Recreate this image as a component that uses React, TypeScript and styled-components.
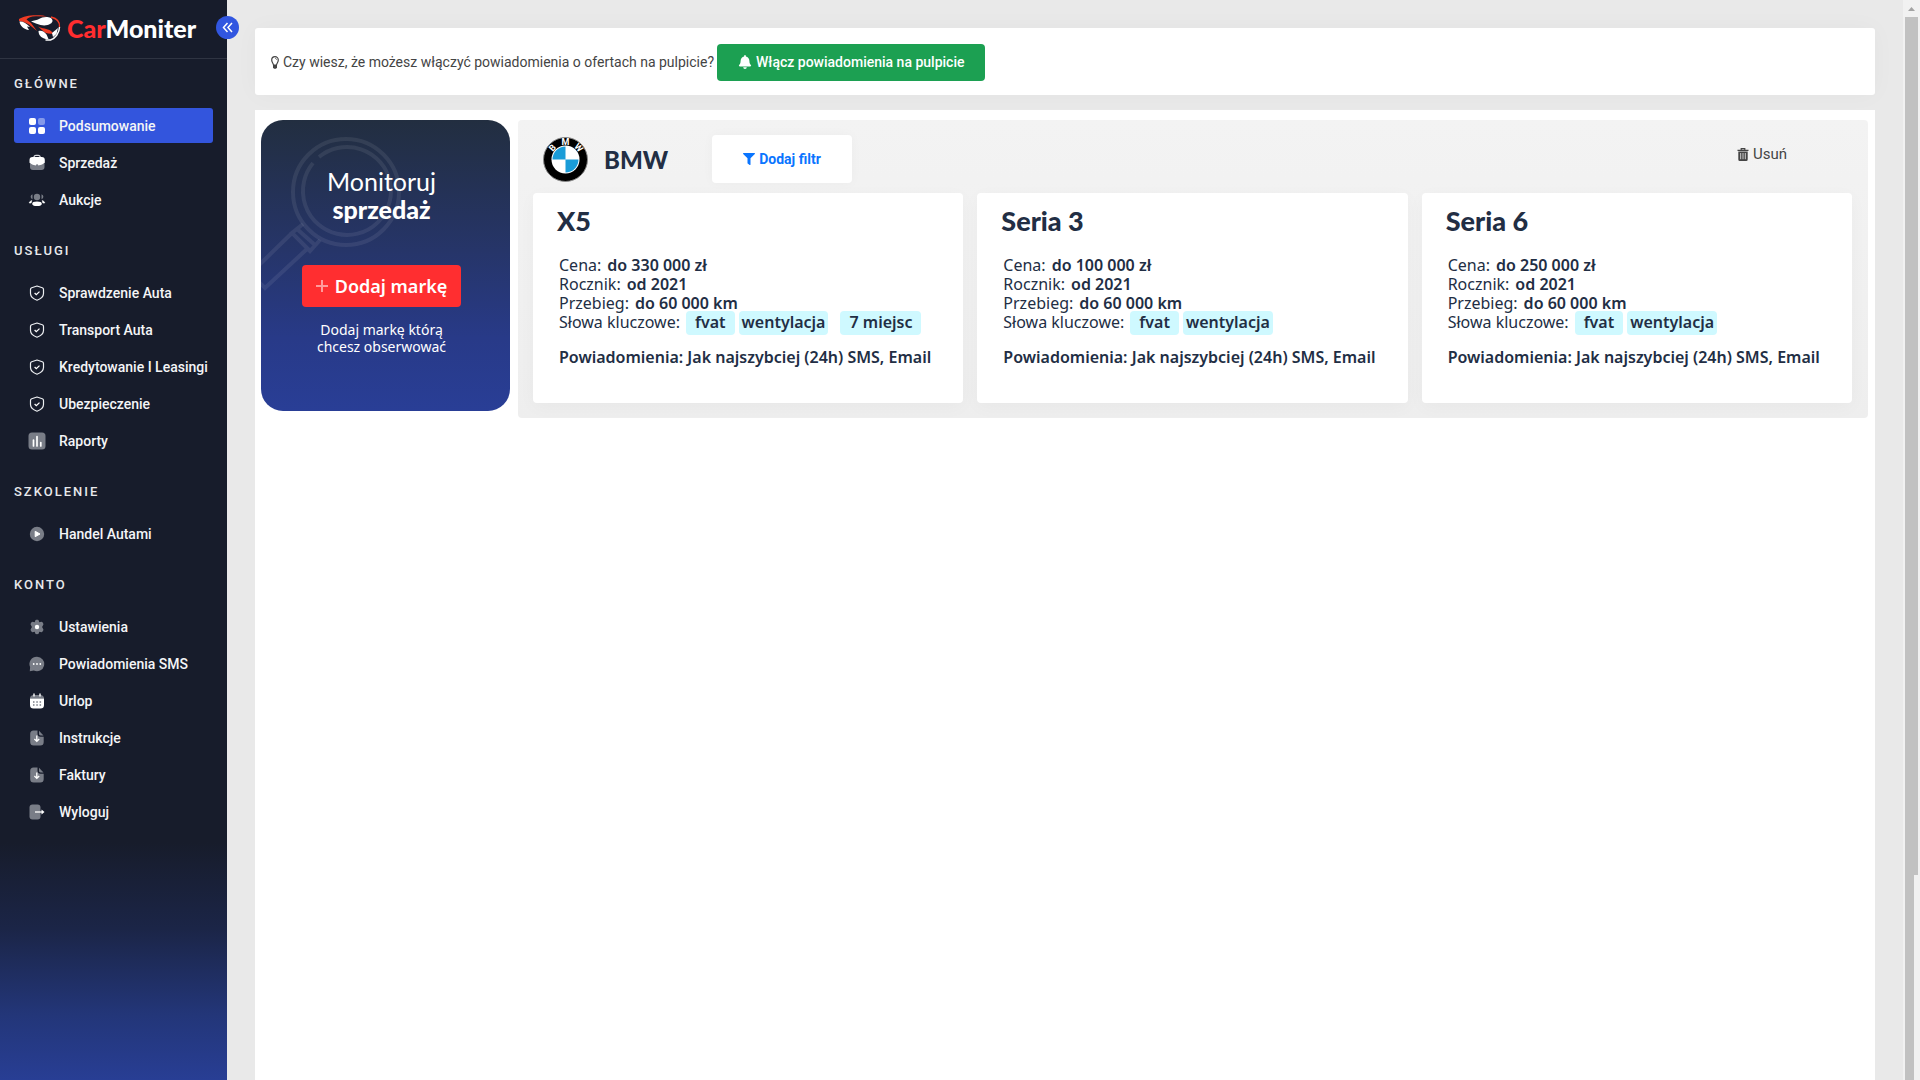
import React from "react";
import styled, { createGlobalStyle } from "styled-components";
import { FaBell, FaFilter } from "react-icons/fa";

const GlobalStyle = createGlobalStyle`
  *, *::before, *::after { box-sizing: border-box; }
  body {
    margin: 0;
    background: #e9e9e9;
    font-family: Roboto, "Liberation Sans", sans-serif;
    font-size: 14px;
    color: #444;
  }
  button { font-family: inherit; border: 0; cursor: pointer; }
  h1, h2, h3, p, ul, dl, dd { margin: 0; padding: 0; }
`;

const display = `"Lato", "Open Sans", sans-serif`;
const copy = `"Noto Sans", "Open Sans", sans-serif`;

const Page = styled.div`
  display: flex;
  align-items: stretch;
  min-height: 100vh;
`;

/* ---------- sidebar ---------- */

const Sidebar = styled.aside`
  position: relative;
  flex: 0 0 227px;
  background: linear-gradient(180deg, #171c2b 0%, #171c2b 78%, #1b2547 86%, #233679 94%, #283e94 100%);
  color: #fff;
`;

const Brand = styled.a`
  display: flex;
  align-items: center;
  gap: 6px;
  height: 59px;
  padding: 0 0 2px 18px;
  border-bottom: 1px solid #2f3442;
  color: #fff;
  font-family: ${display};
  font-size: 25px;
  font-weight: 900;
  text-decoration: none;
`;

const BrandAccent = styled.span`
  color: #ff2d2f;
`;

const Collapse = styled.button`
  position: absolute;
  top: 16px;
  right: -12px;
  display: grid;
  place-items: center;
  width: 23px;
  height: 23px;
  padding: 0;
  border-radius: 50%;
  background: #3156e0;
`;

const Nav = styled.nav`
  display: flex;
  flex-direction: column;
  gap: 24px;
  padding: 15px 14px 0;
`;

const NavTitle = styled.h2`
  margin-bottom: 14px;
  color: #e8e9ec;
  font-size: 13px;
  font-weight: 500;
  line-height: 20px;
  letter-spacing: 2px;
`;

const NavList = styled.ul`
  display: flex;
  flex-direction: column;
  gap: 2px;
  list-style: none;
`;

const NavLink = styled.a<{ $active?: boolean }>`
  display: flex;
  align-items: center;
  gap: 13px;
  height: 35px;
  padding-left: 14px;
  border-radius: 3px;
  background: ${(p) => (p.$active ? "#3355dd" : "transparent")};
  color: #f4f5f7;
  font-size: 14px;
  font-weight: 500;
  text-decoration: none;
  white-space: nowrap;

  svg { flex: none; }
`;

/* ---------- main ---------- */

const Main = styled.main`
  flex: 1;
  min-width: 0;
  display: flex;
  flex-direction: column;
  gap: 15px;
  padding: 28px 28px 0;
`;

const Banner = styled.section`
  display: flex;
  align-items: center;
  gap: 3px;
  min-height: 67px;
  padding: 1px 16px 0;
  border-radius: 3px;
  background: #fff;
  box-shadow: 0 0 24px rgba(0, 0, 0, 0.03);
`;

const BannerText = styled.p`
  display: flex;
  align-items: center;
  gap: 4px;
  font-size: 14px;
`;

const NotifyButton = styled.button`
  display: flex;
  align-items: center;
  gap: 4px;
  height: 37px;
  padding: 0 21px;
  border-radius: 4px;
  background: #1ca052;
  color: #fff;
  font-size: 14px;
  font-weight: 500;
`;

const Panel = styled.section`
  flex: 1;
  display: flex;
  align-items: flex-start;
  gap: 8px;
  padding: 10px 7px 24px 6px;
  background: #fff;
`;

const Promo = styled.section`
  position: relative;
  overflow: hidden;
  flex: 0 0 249px;
  display: flex;
  flex-direction: column;
  align-items: center;
  min-height: 291px;
  padding: 47px 20px 0 12px;
  border-radius: 22px;
  background: linear-gradient(180deg, #222e40 0%, #263569 45%, #283a88 75%, #293e96 100%);
  color: #fff;
  font-family: ${display};
  text-align: center;
`;

const Glass = styled.svg`
  position: absolute;
  top: 0;
  left: 0;
  width: 160px;
  height: 180px;
  fill: none;
  stroke: rgba(255, 255, 255, 0.08);
  stroke-width: 4;
`;

const PromoTitle = styled.h1`
  position: relative;
  margin-bottom: 42px;
  font-size: 25px;
  font-weight: 400;
  line-height: 28px;

  strong { display: block; font-weight: 900; }
`;

const AddBrand = styled.button`
  display: flex;
  align-items: center;
  justify-content: center;
  gap: 7px;
  width: 159px;
  height: 42px;
  margin-bottom: 14px;
  padding: 0;
  border-radius: 4px;
  background: #ff2e30;
  color: #fff;
  font-family: ${copy};
  font-size: 18px;
  font-weight: 600;
`;

const PromoNote = styled.p`
  font-family: ${copy};
  font-size: 14px;
  line-height: 17px;
`;

const BrandPanel = styled.section`
  flex: 1;
  min-width: 0;
  padding: 15px 16px 15px 15px;
  border-radius: 4px;
  background: linear-gradient(180deg, #f3f3f3, #eeeeee);
`;

const BrandHeader = styled.header`
  display: flex;
  align-items: center;
  height: 48px;
  margin-bottom: 10px;
  padding: 0 65px 0 10px;
`;

const BrandName = styled.h2`
  width: 108px;
  margin-left: 16px;
  color: #222e44;
  font-family: ${display};
  font-size: 24px;
  font-weight: 900;
`;

const FilterButton = styled.button`
  display: flex;
  align-items: center;
  justify-content: center;
  gap: 4px;
  width: 140px;
  height: 48px;
  border-radius: 4px;
  background: #fff;
  box-shadow: 0 0 12px rgba(0, 0, 0, 0.03);
  color: #0a75ff;
  font-size: 14px;
  font-weight: 700;
`;

const RemoveButton = styled.button`
  display: flex;
  align-items: center;
  gap: 4px;
  margin: 0 0 10px auto;
  padding: 0;
  background: none;
  color: #444;
  font-size: 15px;
`;

const Cards = styled.div`
  display: grid;
  grid-template-columns: repeat(3, minmax(0, 1fr));
  gap: 14px;
`;

const Card = styled.article`
  min-height: 210px;
  padding: 13px 8px 16px 24px;
  border-radius: 4px;
  background: #fff;
  box-shadow: 0 4px 18px rgba(0, 0, 0, 0.03);
  color: #222e44;
  font-family: ${copy};
`;

const CardTitle = styled.h3`
  margin-bottom: 20px;
  font-family: ${display};
  font-size: 27px;
  font-weight: 900;
  line-height: 30px;
`;

const Specs = styled.dl`
  padding-left: 2px;
  font-size: 16px;
  line-height: 19px;
`;

const Spec = styled.div`
  display: flex;
  gap: 6px;
  height: 19px;
  white-space: nowrap;

  dd { font-weight: 600; }
`;

const Tags = styled.dd`
  display: flex;
  align-items: center;
  gap: 4px;
`;

const Tag = styled.span<{ $roomy?: boolean }>`
  padding: 2px ${(p) => (p.$roomy ? 9 : 3)}px 3px;
  border-radius: 4px;
  background: #cff9ff;

  * + & { margin-left: ${(p) => (p.$roomy ? 8 : 0)}px; }
`;

const Notice = styled.p`
  margin-top: 16px;
  padding-left: 2px;
  font-size: 16px;
  font-weight: 600;
  line-height: 19px;
  white-space: nowrap;
`;

/* ---------- page scroll rail ---------- */

const Rail = styled.div`
  flex: 0 0 17px;
  display: flex;
  flex-direction: column;
  align-items: flex-start;
  background: #f1f1f1;
`;

const RailArrow = styled.svg`
  flex: none;
  width: 17px;
  height: 17px;
`;

const RailThumb = styled.div`
  flex: 858;
  width: 13px;
  margin-left: 2px;
  background: #c1c1c1;
`;

const RailRest = styled.div`
  flex: 205;
  width: 9px;
  margin-left: 2px;
  background: #c1c1c1;
`;

/* ---------- drawings ---------- */

const dim = "#797d87";

const glyphs: Record<string, React.ReactNode> = {
  grid: (
    <>
      <rect x="0" y="0" width="7" height="7" rx="2" fill="#fff" />
      <rect x="9" y="0" width="7" height="7" rx="2" fill="#fff" opacity=".4" />
      <rect x="0" y="9" width="7" height="7" rx="2" fill="#fff" />
      <rect x="9" y="9" width="7" height="7" rx="2" fill="#fff" />
    </>
  ),
  bag: (
    <>
      <path d="M1 8.5h14.500V12a3 3 0 0 1-3 3H4a3 3 0 0 1-3-3z" fill={dim} />
      <path d="M5 2.200C5 1 6 .3 7 .3h2.200c1 0 2 .7 2 1.900" fill="none" stroke="#d5d7db" strokeWidth="1.200" />
      <path d="M3.500 2h9.300a3 3 0 0 1 3 3v2.500c0 1-4 2.700-6.500 2.900a1.200 1.200 0 0 0-2.400 0C4.500 10.200.5 8.500.5 7.500V5a3 3 0 0 1 3-3z" fill="#fff" />
    </>
  ),
  people: (
    <>
      <circle cx="8" cy="5" r="3.200" fill={dim} />
      <path d="M3.500 2.300A2.600 2.600 0 0 0 3.500 7.300M12.500 2.300a2.600 2.600 0 0 1 0 5" fill={dim} />
      <ellipse cx="8" cy="11.800" rx="4.800" ry="2.300" fill="#fff" />
      <path d="M2.800 8.600C1.400 9 .3 9.900.3 11h1.800zM13.200 8.600c1.400.4 2.500 1.300 2.500 2.400h-1.800z" fill="#fff" stroke="#fff" strokeWidth=".6" />
    </>
  ),
  shield: (
    <>
      <path d="M8 1l5.300 1.800c.8.300 1.200.8 1.200 1.600v4.100c0 3.200-3 5.400-6.500 6.700C4.500 13.900 1.500 11.700 1.500 8.500V4.400c0-.8.400-1.300 1.200-1.600z" fill="none" stroke="#eceef1" strokeWidth="1.200" strokeLinejoin="round" />
      <path d="M5.600 8l1.700 1.600 3.200-3" fill="none" stroke="#fff" strokeWidth="1.300" />
    </>
  ),
  chart: (
    <>
      <rect x="-.5" y="-.5" width="17" height="17" rx="3.500" fill={dim} />
      <path d="M4.500 7v6M8 3.500V13M11.800 9.500V13" stroke="#fff" strokeWidth="1.700" strokeLinecap="round" />
    </>
  ),
  play: (
    <>
      <circle cx="8" cy="8" r="7.200" fill={dim} />
      <path d="M6.200 5.300v5.400L11 8z" fill="#fff" stroke="#fff" strokeLinejoin="round" />
    </>
  ),
  gear: (
    <>
      <path d="M6.400 1.200C6.800.6 9.200.6 9.600 1.200l.7 2 2.200-.4c.8 0 2.200 2 1.900 2.700L13.100 8l1.300 2.500c.3.700-1.100 2.700-1.900 2.700l-2.200-.4-.7 2c-.4.600-2.800.6-3.200 0l-.7-2-2.200.4c-.8 0-2.200-2-1.900-2.700L2.900 8 1.600 5.500c-.3-.7 1.100-2.700 1.900-2.700l2.200.4z" fill={dim} />
      <circle cx="8" cy="8" r="2.200" fill="#fff" />
    </>
  ),
  chat: (
    <>
      <path d="M8 .7a7.300 7.300 0 1 1-3.200 13.900L.8 15.300l.3-4.200A7.300 7.300 0 0 1 8 .7z" fill={dim} />
      <path d="M4.700 8h.01M8 8h.01M11.300 8h.01" stroke="#fff" strokeWidth="1.800" strokeLinecap="round" />
    </>
  ),
  calendar: (
    <>
      <path d="M1 5.500C1 3.500 2.500 2 4.500 2h7C13.500 2 15 3.500 15 5.500z" fill={dim} />
      <path d="M1 5.500h14V12a3.500 3.500 0 0 1-3.500 3.500h-7A3.500 3.500 0 0 1 1 12z" fill="#fff" />
      <path d="M5 .5v3M11 .5v3" stroke="#fff" strokeWidth="1.400" />
      <path d="M4 9h1.500M7.300 9h1.500M10.600 9h1.500M4 12h1.500M7.300 12h1.500M10.600 12h1.500" stroke={dim} strokeWidth="1.400" />
    </>
  ),
  file: (
    <>
      <path d="M4.500.5h4v3c0 2.200 1 3.200 3 3.200h3.200V12a3.500 3.500 0 0 1-3.500 3.500H4.700A3.500 3.500 0 0 1 1.200 12V4A3.500 3.500 0 0 1 4.500.5z" fill={dim} />
      <path d="M10 .8l4.500 4.600h-2.800c-1.200 0-1.700-.6-1.700-1.700z" fill={dim} />
      <path d="M7.800 5.500v5.500M5.400 9l2.400 2.400L10.200 9" fill="none" stroke="#fff" strokeWidth="1.300" />
    </>
  ),
  exit: (
    <>
      <rect x=".5" y=".5" width="11" height="15" rx="3" fill={dim} />
      <path d="M6 8h7" stroke="#fff" strokeWidth="1.300" />
      <path d="M12.500 5.600v4.800L15.500 8z" fill="#fff" />
    </>
  ),
};

const Glyph = ({ name }: { name: string }) => (
  <svg width="18" height="18" viewBox="-1 -1 18 18" aria-hidden="true">
    {glyphs[name]}
  </svg>
);

const CarMark = () => (
  <svg width="43" height="28" viewBox="0 0 43 28" aria-hidden="true">
    <path d="M1 5C6 1.500 15 .5 25 1.500l4 1-11-.3C13 2.200 10 3.500 8.500 5.500L13 9l6 8-8-6.500C7 8 3 7 1 7z" fill="#ef3b24" />
    <path d="M1.500 7.500c3-.5 7 1.500 10.500 5.500l-3-.5 2 3.500C6 15.500 2 12 1.500 7.500z" fill="#fff" />
    <path d="M13 7.500c3-1.500 6-1 8-2.500 4-3 13-3 13.500 1.500.3 3-5 6-12 4.500-3-.7-6-2-9.500-3.500z" fill="#fff" />
    <path d="M20 12.500c4 2.500 9 1.500 13 4.500l2.500 2.500c-4 1-9-.5-11-3z" fill="#ef3b24" />
    <path d="M20.500 17c3-1 6 .5 8 3.500l2 4.500c-5 .5-10-2.500-10-8z" fill="#fff" />
    <path d="M33 3c6 1.500 9 5 8.500 10" fill="none" stroke="#ef3b24" strokeWidth="1.300" />
    <path d="M41.500 13c0 6-4.500 11.500-9 13h-5" fill="none" stroke="#fff" strokeWidth="1.500" />
    <path d="M34 19l6-5-1.500 6-3.500 3z" fill="#fff" />
  </svg>
);

const BmwBadge = () => (
  <svg width="45" height="45" viewBox="0 0 45 45" role="img" aria-label="BMW">
    <circle cx="22.500" cy="22.500" r="22" fill="#000" stroke="#8a8a8a" />
    <circle cx="22.500" cy="22.500" r="14" fill="#fff" />
    <path d="M22.500 22.500V9.500a13 13 0 0 0-13 13zM22.500 22.500v13a13 13 0 0 0 13-13z" fill="#1a9cd8" />
    <g fill="#fff" fontFamily="Roboto, sans-serif" fontWeight="700" fontSize="9" textAnchor="middle">
      <text x="22.500" y="8" transform="rotate(-48 22.500 22.500)">B</text>
      <text x="22.500" y="8">M</text>
      <text x="22.500" y="8" transform="rotate(48 22.500 22.500)">W</text>
    </g>
  </svg>
);

const Bulb = () => (
  <svg width="8" height="13" viewBox="0 0 8 13" aria-hidden="true">
    <path d="M2.500 9C2.300 7.300.7 6.200.7 4a3.300 3.300 0 0 1 6.600 0c0 2.200-1.600 3.300-1.800 5z" fill="none" stroke="#444" strokeWidth="1.200" />
    <path d="M2 9h4v2.500L5 12.700H3L2 11.500z" fill="#444" />
    <path d="M4 2.300c1 0 1.600.7 1.600 1.500" fill="none" stroke="#444" strokeWidth=".8" />
  </svg>
);

const Trash = () => (
  <svg width="12" height="13" viewBox="0 0 11 13" aria-hidden="true">
    <path d="M3.700 2V.7h3.600V2M0 2.300h11" fill="none" stroke="#444" strokeWidth="1.200" />
    <path d="M.8 3.500h9.400v8a1.500 1.500 0 0 1-1.500 1.500H2.300A1.500 1.500 0 0 1 .8 11.500z" fill="#444" />
    <path d="M3.200 5v6.200M5.500 5v6.200M7.800 5v6.200" stroke="#f2f2f2" strokeWidth=".8" />
  </svg>
);

/* ---------- data ---------- */

const menu = [
  {
    title: "GŁÓWNE",
    items: [
      ["grid", "Podsumowanie"],
      ["bag", "Sprzedaż"],
      ["people", "Aukcje"],
    ],
  },
  {
    title: "USŁUGI",
    items: [
      ["shield", "Sprawdzenie Auta"],
      ["shield", "Transport Auta"],
      ["shield", "Kredytowanie I Leasingi"],
      ["shield", "Ubezpieczenie"],
      ["chart", "Raporty"],
    ],
  },
  { title: "SZKOLENIE", items: [["play", "Handel Autami"]] },
  {
    title: "KONTO",
    items: [
      ["gear", "Ustawienia"],
      ["chat", "Powiadomienia SMS"],
      ["calendar", "Urlop"],
      ["file", "Instrukcje"],
      ["file", "Faktury"],
      ["exit", "Wyloguj"],
    ],
  },
];

const models = [
  { name: "X5", price: "do 330 000 zł", tags: ["fvat", "wentylacja", "7 miejsc"] },
  { name: "Seria 3", price: "do 100 000 zł", tags: ["fvat", "wentylacja"] },
  { name: "Seria 6", price: "do 250 000 zł", tags: ["fvat", "wentylacja"] },
];

export default function App() {
  return (
    <Page>
      <GlobalStyle />
      <Sidebar>
        <Brand href="#">
          <CarMark />
          <span><BrandAccent>Car</BrandAccent>Moniter</span>
        </Brand>
        <Collapse type="button" aria-label="Zwiń menu">
          <svg width="11" height="11" viewBox="0 0 11 11" fill="none" stroke="#fff" strokeWidth="1.500">
            <path d="M5.500 1L1.500 5.500l4 4.500M10 1L6 5.500l4 4.500" />
          </svg>
        </Collapse>
        <Nav>
          {menu.map((group) => (
            <section key={group.title}>
              <NavTitle>{group.title}</NavTitle>
              <NavList>
                {group.items.map(([icon, label]) => (
                  <li key={label}>
                    <NavLink href="#" $active={label === "Podsumowanie"}>
                      <Glyph name={icon} />
                      {label}
                    </NavLink>
                  </li>
                ))}
              </NavList>
            </section>
          ))}
        </Nav>
      </Sidebar>

      <Main>
        <Banner>
          <BannerText>
            <Bulb />
            Czy wiesz, że możesz włączyć powiadomienia o ofertach na pulpicie?
          </BannerText>
          <NotifyButton type="button">
            <FaBell size={14} />
            Włącz powiadomienia na pulpicie
          </NotifyButton>
        </Banner>

        <Panel>
          <Promo>
            <Glass viewBox="0 0 160 180" aria-hidden="true">
              <circle cx="85" cy="72" r="53" />
              <path d="M58 37a44 44 0 1 1-6 6" />
              <path d="M42 104L31 113l18 18 10-11M36 109l18 16M31 113L-4 147M46 129L4 168L-6 158" />
            </Glass>
            <PromoTitle>
              Monitoruj <strong>sprzedaż</strong>
            </PromoTitle>
            <AddBrand type="button">
              <svg width="12" height="12" viewBox="0 0 12 12" stroke="#ff9a9b" strokeWidth="2">
                <path d="M6 0v12M0 6h12" />
              </svg>
              Dodaj markę
            </AddBrand>
            <PromoNote>
              Dodaj markę którą
              <br />
              chcesz obserwować
            </PromoNote>
          </Promo>

          <BrandPanel>
            <BrandHeader>
              <BmwBadge />
              <BrandName>BMW</BrandName>
              <FilterButton type="button">
                <FaFilter size={12} />
                Dodaj filtr
              </FilterButton>
              <RemoveButton type="button">
                <Trash />
                Usuń
              </RemoveButton>
            </BrandHeader>
            <Cards>
              {models.map((m) => (
                <Card key={m.name}>
                  <CardTitle>{m.name}</CardTitle>
                  <Specs>
                    <Spec><dt>Cena:</dt><dd>{m.price}</dd></Spec>
                    <Spec><dt>Rocznik:</dt><dd>od 2021</dd></Spec>
                    <Spec><dt>Przebieg:</dt><dd>do 60 000 km</dd></Spec>
                    <Spec>
                      <dt>Słowa kluczowe:</dt>
                      <Tags>
                        {m.tags.map((t) => (
                          <Tag key={t} $roomy={t !== "wentylacja"}>{t}</Tag>
                        ))}
                      </Tags>
                    </Spec>
                  </Specs>
                  <Notice>Powiadomienia: Jak najszybciej (24h) SMS, Email</Notice>
                </Card>
              ))}
            </Cards>
          </BrandPanel>
        </Panel>
      </Main>

      <Rail aria-hidden="true">
        <RailArrow viewBox="0 0 17 17"><path d="M5 11l3.500-4L12 11z" fill="#a3a3a3" /></RailArrow>
        <RailThumb />
        <RailRest />
      </Rail>
    </Page>
  );
}
